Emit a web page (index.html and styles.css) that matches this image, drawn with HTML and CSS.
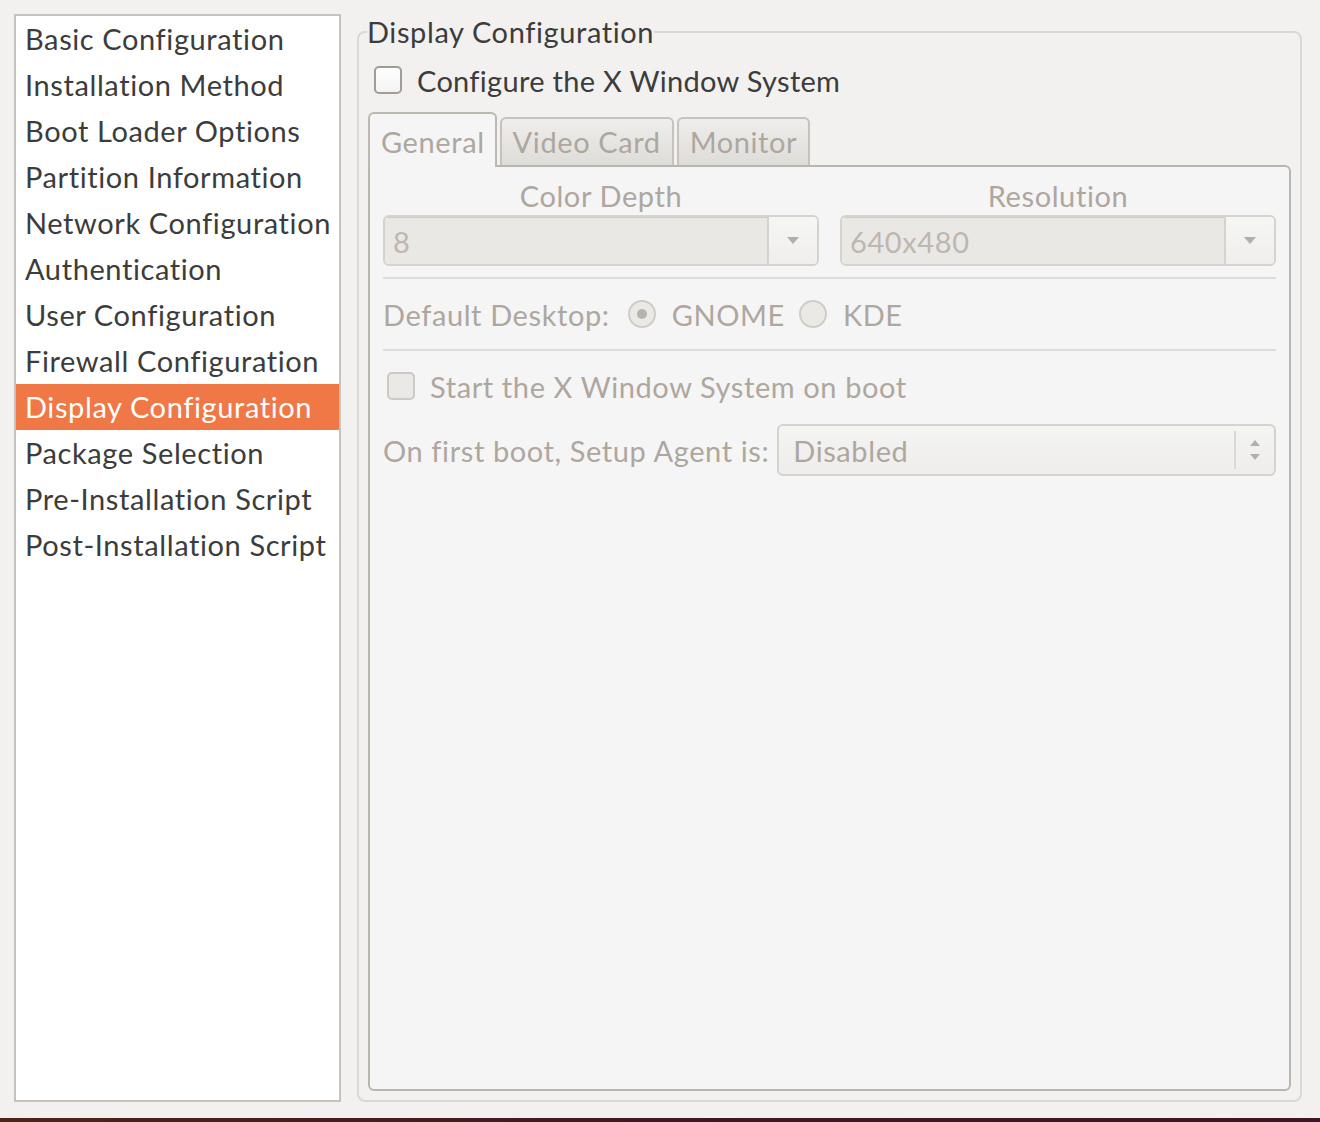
FILE: index.html
```html
<!DOCTYPE html>
<html>
<head>
<meta charset="utf-8">
<link rel="stylesheet" href="styles.css">
</head>
<body>
<div class="window">
  <div class="main">
    <ul class="sidebar">
      <li>Basic Configuration</li>
      <li>Installation Method</li>
      <li>Boot Loader Options</li>
      <li>Partition Information</li>
      <li>Network Configuration</li>
      <li>Authentication</li>
      <li>User Configuration</li>
      <li>Firewall Configuration</li>
      <li class="selected">Display Configuration</li>
      <li>Package Selection</li>
      <li>Pre-Installation Script</li>
      <li>Post-Installation Script</li>
    </ul>
    <fieldset class="frame">
      <legend class="frame-title">Display Configuration</legend>
      <div class="check-row top-check">
        <span class="checkbox"></span>
        <span class="check-label">Configure the X Window System</span>
      </div>
      <div class="notebook">
        <div class="tabs">
          <div class="tab active">General</div>
          <div class="tab">Video Card</div>
          <div class="tab">Monitor</div>
        </div>
        <div class="panel">
          <div class="columns">
            <div class="col">
              <div class="col-label">Color Depth</div>
              <div class="combo">
                <div class="combo-entry">8</div>
                <div class="combo-button"><span class="arrow-down"></span></div>
              </div>
            </div>
            <div class="col">
              <div class="col-label">Resolution</div>
              <div class="combo">
                <div class="combo-entry">640x480</div>
                <div class="combo-button"><span class="arrow-down"></span></div>
              </div>
            </div>
          </div>
          <div class="separator"></div>
          <div class="radio-row">
            <span class="radio-label">Default Desktop:</span>
            <span class="radio checked"></span>
            <span class="radio-text">GNOME</span>
            <span class="radio"></span>
            <span class="radio-text">KDE</span>
          </div>
          <div class="separator"></div>
          <div class="check-row boot-check">
            <span class="checkbox disabled"></span>
            <span class="check-label dis">Start the X Window System on boot</span>
          </div>
          <div class="agent-row">
            <span class="agent-label">On first boot, Setup Agent is:</span>
            <div class="spin">
              <span class="spin-value">Disabled</span>
              <span class="spin-arrows">
                <span class="arrow-up small"></span>
                <span class="arrow-down small"></span>
              </span>
            </div>
          </div>
        </div>
      </div>
    </fieldset>
  </div>
  <div class="bottombar"></div>
</div>
</body>
</html>
```

FILE: styles.css
```css
* { box-sizing: border-box; }
html, body {
  margin: 0;
  padding: 0;
  background: #f2f1f0;
  font-family: "Lato", "Open Sans", sans-serif;
  font-size: 29px;
  letter-spacing: 0.6px;
  color: #3c3c3c;
}
.window {
  width: 1320px;
  height: 1122px;
  display: flex;
  flex-direction: column;
  overflow: hidden;
}
.main {
  flex: 1;
  display: flex;
  gap: 16px;
  padding: 14px 18px 16px 14px;
  min-height: 0;
}
.sidebar {
  list-style: none;
  margin: 0;
  padding: 0;
  width: 327px;
  flex: none;
  background: #ffffff;
  border: 2px solid #c6c3be;
}
.sidebar li {
  height: 46px;
  line-height: 46px;
  padding-left: 9px;
  white-space: nowrap;
}
.sidebar li.selected {
  background: #f07746;
  color: #ffffff;
}
.frame {
  flex: 1;
  min-width: 0;
  margin: 0;
  padding: 0 9px 9px 9px;
  border: 2px solid #dbd8d3;
  border-radius: 8px;
  display: flex;
  flex-direction: column;
}
.frame-title {
  padding: 0;
  margin-left: -1px;
  line-height: 36px;
  height: 36px;
}
.check-row {
  display: flex;
  align-items: center;
}
.top-check {
  height: 40px;
  margin-top: 10px;
  padding-left: 6px;
}
.top-check .check-label {
  letter-spacing: 0.3px;
}
.checkbox {
  width: 28px;
  height: 28px;
  border: 2px solid #a09c96;
  border-radius: 5px;
  background: linear-gradient(#ffffff, #f4f3f2);
  flex: none;
  margin-right: 15px;
}
.checkbox.disabled {
  border-color: #cdc9c3;
  background: #ebe9e6;
}
.notebook {
  margin-top: 12px;
  flex: 1;
  display: flex;
  flex-direction: column;
}
.tabs {
  display: flex;
  align-items: flex-end;
  gap: 3px;
  position: relative;
  z-index: 1;
}
.tab {
  height: 48px;
  line-height: 46px;
  padding: 0 11px;
  border: 2px solid #c6c2bc;
  border-bottom: none;
  border-radius: 6px 6px 0 0;
  background: linear-gradient(#efeeec, #dedcd8);
  color: #aea79f;
  white-space: nowrap;
}
.tab.active {
  height: 55px;
  line-height: 56px;
  margin-bottom: -2px;
  background: #f5f5f5;
  border-color: #bcb8b2;
  padding: 0 10px 0 11px;
}
.panel {
  flex: 1;
  background: #f5f5f5;
  border: 2px solid #b9b5af;
  border-radius: 0 6px 6px 6px;
  padding: 12px 13px;
}
.columns {
  display: grid;
  grid-template-columns: 1fr 1fr;
  gap: 21px;
}
.col-label {
  text-align: center;
  line-height: 34px;
  color: #aea79f;
}
.combo {
  margin-top: 2px;
  height: 51px;
  display: flex;
  border: 2px solid #d6d3ce;
  border-radius: 6px;
  overflow: hidden;
}
.combo-entry {
  flex: 1;
  background: #eae8e5;
  color: #bdb7b0;
  line-height: 47px;
  padding-left: 8px;
  border-top: 1px solid #cfccc7;
}
.combo-button {
  width: 50px;
  flex: none;
  background: linear-gradient(#f6f6f5, #efeeec);
  border-left: 2px solid #d6d3ce;
  display: flex;
  align-items: center;
  justify-content: center;
}
.arrow-down {
  width: 0;
  height: 0;
  border-left: 6px solid transparent;
  border-right: 6px solid transparent;
  border-top: 7px solid #b3aea8;
}
.arrow-up {
  width: 0;
  height: 0;
  border-left: 5px solid transparent;
  border-right: 5px solid transparent;
  border-bottom: 6px solid #b3aea8;
}
.arrow-down.small {
  border-left-width: 5px;
  border-right-width: 5px;
  border-top-width: 6px;
}
.separator {
  height: 2px;
  background: #e0ddd9;
}
.columns + .separator {
  margin-top: 11px;
}
.radio-row {
  height: 70px;
  display: flex;
  align-items: center;
  color: #aea79f;
}
.radio-label {
  margin-right: 18px;
}
.radio {
  width: 28px;
  height: 28px;
  border-radius: 50%;
  border: 2px solid #d0ccc6;
  background: #ebe9e6;
  flex: none;
  margin-right: 16px;
  display: flex;
  align-items: center;
  justify-content: center;
}
.radio.checked::after {
  content: "";
  width: 10px;
  height: 10px;
  border-radius: 50%;
  background: #b8b3ad;
}
.radio-text {
  margin-right: 14px;
}
.boot-check {
  height: 70px;
  padding-left: 4px;
}
.check-label.dis {
  color: #aea79f;
}
.agent-row {
  margin-top: 3px;
  display: flex;
  align-items: center;
  color: #aea79f;
}
.agent-label {
  margin-right: 8px;
  white-space: nowrap;
}
.spin {
  flex: 1;
  height: 52px;
  border: 2px solid #d6d3ce;
  border-radius: 6px;
  background: linear-gradient(#f4f4f3, #eeedeb);
  display: flex;
  align-items: center;
  padding-left: 14px;
}
.spin-value {
  flex: 1;
  color: #aea79f;
}
.spin-arrows {
  width: 40px;
  height: 38px;
  border-left: 2px solid #dcd9d5;
  display: flex;
  flex-direction: column;
  align-items: center;
  justify-content: center;
  gap: 8px;
}
.bottombar {
  height: 4px;
  flex: none;
  background: linear-gradient(90deg, #4b251c, #3c1a1f 50%, #3b1528);
}
```
